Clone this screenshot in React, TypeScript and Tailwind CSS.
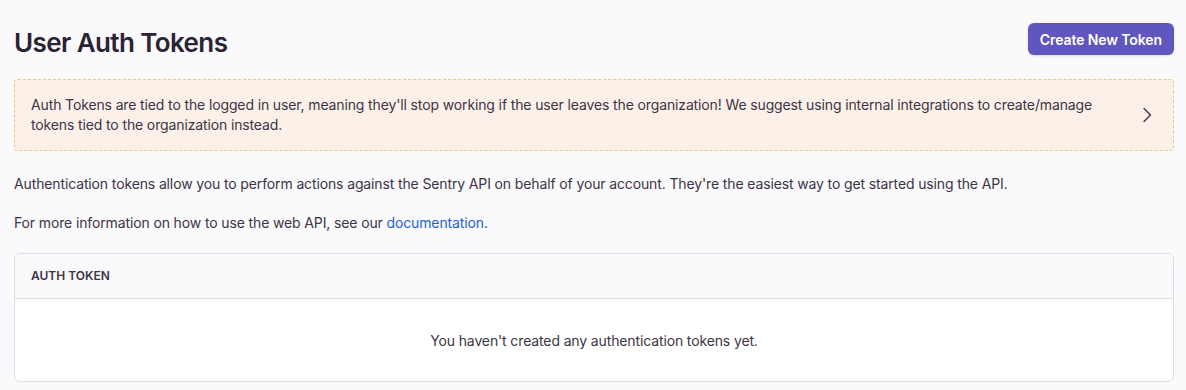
import React from "react";

export default function App() {
  return (
    <div
      className="min-h-[390px] w-full bg-[#faf9fb] pl-[14px] pr-[12px] text-[#2b2233]"
      style={{ fontFamily: "Inter, 'Noto Sans', sans-serif" }}
    >
      <div className="flex items-start justify-between pt-[23px]">
        <h1 className="mt-[2px] text-[26px] font-semibold leading-[36px] tracking-[-0.6px] text-[#2b2233]">
          User Auth Tokens
        </h1>
        <button className="h-[32px] rounded-[6px] bg-[#5f57bd] px-[12px] text-[14px] font-semibold tracking-[-0.1px] text-white shadow-sm">
          Create New Token
        </button>
      </div>

      <div className="mt-[18px] flex items-center justify-between rounded-[4px] border border-dashed border-[#f3c77c] bg-[#fbf1e8] py-[15px] pl-[16px] pr-[18px]">
        <p className="max-w-[1090px] text-[14px] leading-[20px] tracking-[-0.13px] text-[#3e3446]">
          Auth Tokens are tied to the logged in user, meaning they'll stop working if the user leaves the organization! We suggest using internal integrations to create/manage tokens tied to the organization instead.
        </p>
        <svg width="16" height="16" viewBox="0 0 16 16" fill="none" className="shrink-0 text-[#3e3446]">
          <path d="M5 1.5 L11.5 8 L5 14.5" stroke="currentColor" strokeWidth="1.4" strokeLinecap="round" strokeLinejoin="round" />
        </svg>
      </div>

      <p className="mt-[23px] text-[14px] leading-[20px] tracking-[-0.13px] text-[#3e3446]">
        Authentication tokens allow you to perform actions against the Sentry API on behalf of your account. They're the easiest way to get started using the API.
      </p>
      <p className="mt-[19px] text-[14px] leading-[20px] tracking-[-0.13px] text-[#3e3446]">
        For more information on how to use the web API, see our{" "}
        <a className="text-[#2562d4]" href="#">documentation</a>.
      </p>

      <div className="mt-[20px] overflow-hidden rounded-[6px] border border-[#e0dce5] bg-white">
        <div className="flex h-[45px] items-center border-b border-[#e0dce5] bg-[#faf9fb] px-[16px] text-[12px] font-semibold uppercase text-[#3e3446]">
          Auth Token
        </div>
        <div className="flex h-[82px] items-center justify-center text-[14px] tracking-[-0.13px] text-[#3e3446]">
          You haven't created any authentication tokens yet.
        </div>
      </div>
    </div>
  );
}
